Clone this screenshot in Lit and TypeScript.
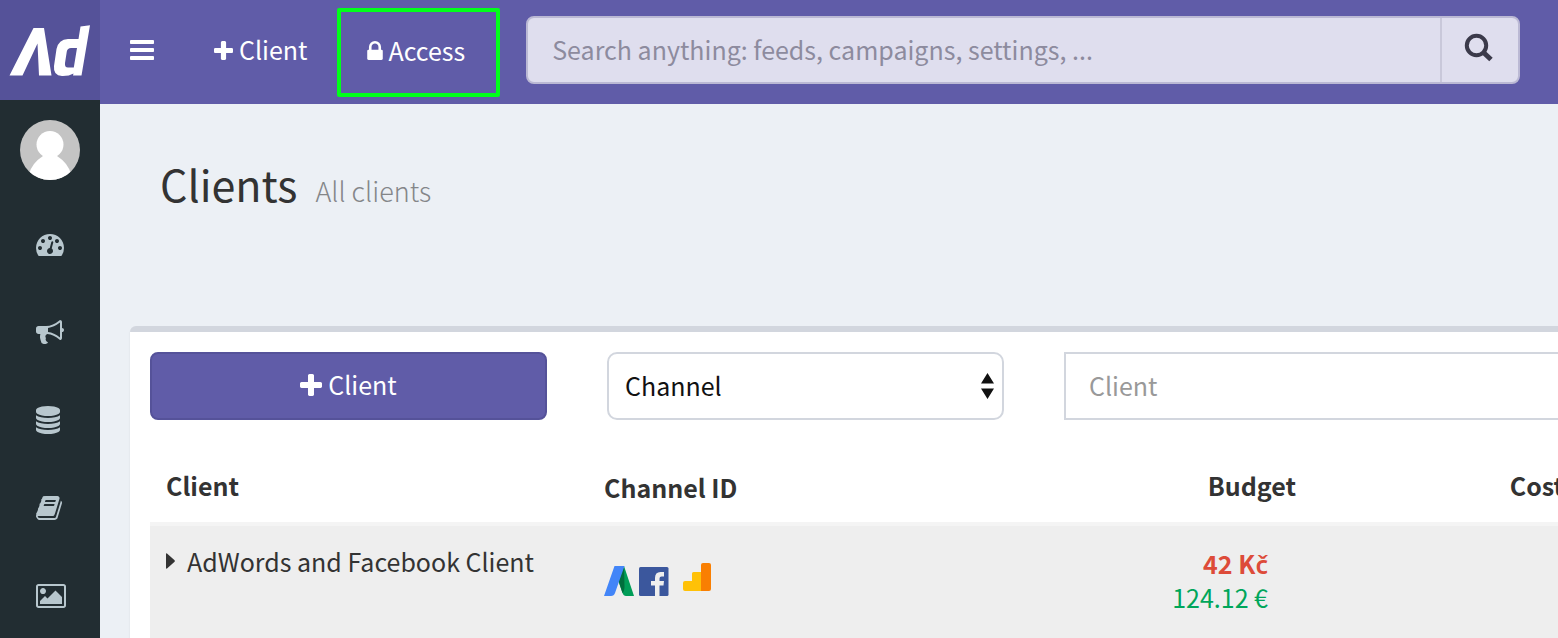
import { LitElement, html, css, svg } from "lit";
import { customElement } from "lit/decorators.js";

const icon = (box: string, d: string, cls: string) => html`
  <svg class=${cls} viewBox=${box} aria-hidden="true">${svg`<path d=${d} fill="currentColor"></path>`}</svg>
`;

const PLUS =
  "M1600 736v192q0 40-28 68t-68 28h-416v416q0 40-28 68t-68 28h-192q-40 0-68-28t-28-68v-416h-416q-40 0-68-28t-28-68v-192q0-40 28-68t68-28h416v-416q0-40 28-68t68-28h192q40 0 68 28t28 68v416h416q40 0 68 28t28 68z";
const BARS =
  "M1664 1344v128q0 26-19 45t-45 19h-1408q-26 0-45-19t-19-45v-128q0-26 19-45t45-19h1408q26 0 45 19t19 45zm0-512v128q0 26-19 45t-45 19h-1408q-26 0-45-19t-19-45v-128q0-26 19-45t45-19h1408q26 0 45 19t19 45zm0-512v128q0 26-19 45t-45 19h-1408q-26 0-45-19t-19-45v-128q0-26 19-45t45-19h1408q26 0 45 19t19 45z";
const LOCK =
  "M640 768h512v-192q0-106-75-181t-181-75-181 75-75 181v192zm832 96v576q0 40-28 68t-68 28h-960q-40 0-68-28t-28-68v-576q0-40 28-68t68-28h32v-192q0-184 132-316t316-132 316 132 132 316v192h32q40 0 68 28t28 68z";

const MENU = [
  {
    label: "Dashboard",
    size: "w28 h24",
    box: "0 128 1792 1536",
    d: "M384 1152q0-53-37.5-90.5t-90.5-37.5-90.5 37.5-37.5 90.5 37.5 90.5 90.5 37.5 90.5-37.5 37.5-90.5zm192-448q0-53-37.5-90.5t-90.5-37.5-90.5 37.5-37.5 90.5 37.5 90.5 90.5 37.5 90.5-37.5 37.5-90.5zm428 481l101-382q6-26-7.5-48.5t-38.5-29.5-48 6.5-30 39.5l-101 382q-60 5-107 43.5t-63 98.5q-20 77 20 146t117 89 146-20 89-117q16-60-6-117t-72-91zm660-33q0-53-37.5-90.5t-90.5-37.5-90.5 37.5-37.5 90.5 37.5 90.5 90.5 37.5 90.5-37.5 37.5-90.5zm-640-640q0-53-37.5-90.5t-90.5-37.5-90.5 37.5-37.5 90.5 37.5 90.5 90.5 37.5 90.5-37.5 37.5-90.5zm448 192q0-53-37.5-90.5t-90.5-37.5-90.5 37.5-37.5 90.5 37.5 90.5 90.5 37.5 90.5-37.5 37.5-90.5zm320 448q0 261-141 483-19 29-54 29h-1402q-35 0-54-29-141-221-141-483 0-182 71-348t191-286 286-191 348-71 348 71 286 191 191 286 71 348z",
  },
  {
    label: "Campaigns",
    size: "w28 h24",
    box: "0 128 1792 1536",
    d: "M1664 640q53 0 90.5 37.5t37.5 90.5-37.5 90.5-90.5 37.5v384q0 52-38 90t-90 38q-417-347-812-380-58 19-91 66t-31 100.5 40 92.5q-20 33-23 65.5t6 58 33.5 55 48 50 61.5 50.5q-29 58-111.5 83t-168.5 11.5-132-55.5q-7-23-29.5-87.5t-32-94.5-23-89-15-101 3.5-98.5 22-110.5h-122q-66 0-113-47t-47-113v-192q0-66 47-113t113-47h480q435 0 896-384 52 0 90 38t38 90v384zm-128 604v-954q-394 302-768 343v270q377 42 768 341z",
  },
  {
    label: "Feeds",
    size: "w24 h28",
    box: "128 0 1536 1792",
    d: "M896 768q237 0 443-43t325-127v170q0 69-103 128t-280 93.5-385 34.5-385-34.5-280-93.5-103-128v-170q119 84 325 127t443 43zm0 768q237 0 443-43t325-127v170q0 69-103 128t-280 93.5-385 34.5-385-34.5-280-93.5-103-128v-170q119 84 325 127t443 43zm0-384q237 0 443-43t325-127v170q0 69-103 128t-280 93.5-385 34.5-385-34.5-280-93.5-103-128v-170q119 84 325 127t443 43zm0-1152q208 0 385 34.5t280 93.5 103 128v128q0 69-103 128t-280 93.5-385 34.5-385-34.5-280-93.5-103-128v-128q0-69 103-128t280-93.5 385-34.5z",
  },
  {
    label: "Guide",
    size: "w26 h24",
    box: "64 128 1664 1536",
    d: "M1703 478q40 57 18 129l-275 906q-19 64-76.5 107.5t-122.5 43.5h-923q-77 0-148.5-53.5t-99.5-131.5q-24-67-2-127 0-4 3-27t4-37q1-8-3-21.5t-3-19.5q2-11 8-21t16.5-23.5 16.5-23.5q23-38 45-91.5t30-91.5q3-10 .5-30t-.5-28q3-11 17-28t17-23q21-36 42-92t25-90q1-9-2.5-32t.5-28q4-13 22-30.5t22-22.5q19-26 42.5-84.5t27.5-96.5q1-8-3-25.5t-2-26.5q2-8 9-18t18-23 17-21q8-12 16.5-30.5t15-35 16-36 19.5-32 26.5-23.5 36-11.5 47.5 5.5l-1 3q38-9 51-9h761q74 0 114 56t18 130l-274 906q-36 119-71.5 153.5t-128.5 34.5h-869q-27 0-38 15-11 16-1 43 24 70 144 70h923q29 0 56-15.5t35-41.5l300-987q7-22 5-57 38 15 59 43zm-1064 2q-4 13 2 22.5t20 9.5h608q13 0 25.5-9.5t16.5-22.5l21-64q4-13-2-22.5t-20-9.5h-608q-13 0-25.5 9.5t-16.5 22.5zm-83 256q-4 13 2 22.5t20 9.5h608q13 0 25.5-9.5t16.5-22.5l21-64q4-13-2-22.5t-20-9.5h-608q-13 0-25.5 9.5t-16.5 22.5z",
  },
  {
    label: "Images",
    size: "w30 h24",
    box: "0 128 1920 1536",
    d: "M640 576q0 80-56 136t-136 56-136-56-56-136 56-136 136-56 136 56 56 136zm1024 384v448h-1408v-192l320-320 160 160 512-512zm96-704h-1600q-13 0-22.5 9.5t-9.5 22.5v1216q0 13 9.5 22.5t22.5 9.5h1600q13 0 22.5-9.5t9.5-22.5v-1216q0-13-9.5-22.5t-22.5-9.5zm160 32v1216q0 66-47 113t-113 47h-1600q-66 0-113-47t-47-113v-1216q0-66 47-113t113-47h1600q66 0 113 47t47 113z",
  },
];

@customElement("app-root")
export class AppRoot extends LitElement {
  static styles = css`
    :host {
      display: flex;
      height: 100vh;
      overflow: hidden;
      background: #ecf0f5;
      color: #333;
      font: 400 25px/34px "Noto Sans CJK JP", "Noto Sans", sans-serif;
    }
    * {
      box-sizing: border-box;
    }
    a {
      color: inherit;
      text-decoration: none;
    }
    button,
    input,
    select {
      font: inherit;
      margin: 0;
      outline: none;
    }
    svg {
      display: block;
      flex: none;
    }
    .sidebar {
      flex: none;
      width: 100px;
      background: #222d32;
      color: #b8c7ce;
    }
    .logo {
      display: flex;
      height: 100px;
      background: #555299;
    }
    .logo svg {
      width: 100px;
      height: 100px;
    }
    .avatar {
      display: block;
      width: 60px;
      height: 60px;
      margin: 20px;
    }
    .menu {
      list-style: none;
      margin: 0;
      padding: 0;
    }
    .menu a {
      display: flex;
      align-items: center;
      height: 88px;
      padding-left: 36px;
    }
    .w24 { width: 24px; }
    .w26 { width: 26px; }
    .w28 { width: 28px; }
    .w30 { width: 30px; }
    .h24 { height: 24px; }
    .h28 { height: 28px; }
    .page {
      flex: 1;
      min-width: 0;
      overflow: hidden;
    }
    .topbar {
      display: flex;
      align-items: stretch;
      height: 104px;
      padding-right: 38px;
      background: #605ca8;
      color: #fff;
    }
    .toggle {
      display: flex;
      align-items: center;
      padding: 0 30px 4px;
      border: 0;
      background: none;
      color: inherit;
    }
    .bars {
      width: 24px;
      height: 20px;
    }
    .nav-link {
      display: flex;
      align-items: center;
      gap: 6px;
      padding: 0 30px 4px;
    }
    .nav-link span,
    .add span {
      padding-bottom: 2px;
    }
    .nav-link .plus {
      width: 19px;
      height: 19px;
    }
    .lock {
      width: 16px;
      height: 19px;
    }
    .marked {
      gap: 5px;
      margin: 8px 26px 7px 0;
      border: 4px solid #00ff1a;
      border-radius: 2px;
      padding: 0 31px 4px 26px;
    }
    .search {
      display: flex;
      flex: 1;
      min-width: 0;
      margin: 16px 0 20px;
      border: 2px solid #bbb9d4;
      border-radius: 8px;
      background: #dfdeee;
    }
    .search input {
      flex: 1;
      min-width: 0;
      padding: 0 24px 2px;
      border: 0;
      background: none;
      color: #333;
    }
    .search input::placeholder {
      color: #8d8b9e;
      opacity: 1;
    }
    .search button {
      display: flex;
      justify-content: center;
      width: 78px;
      padding: 15px 2px 0 0;
      border: 0;
      border-left: 2px solid #c9c8da;
      background: none;
      color: #3b3a4a;
    }
    .search svg {
      width: 30px;
      height: 30px;
    }
    .heading {
      display: flex;
      align-items: baseline;
      gap: 18px;
      height: 222px;
      padding: 49px 60px;
    }
    h1 {
      margin: 0;
      font-size: 43px;
      line-height: 60px;
      font-weight: 400;
    }
    .sub {
      font-size: 27px;
      font-weight: 300;
      color: #848689;
    }
    .box {
      margin: 0 -320px 0 30px;
      padding: 20px;
      border-top: 6px solid #d2d6de;
      border-radius: 6px;
      background: #fff;
      box-shadow: 0 2px 2px rgba(0, 0, 0, 0.1);
    }
    .filters {
      display: grid;
      grid-template-columns: 1fr 1fr 2fr;
      gap: 60px;
    }
    .add {
      display: flex;
      align-items: center;
      justify-content: center;
      gap: 6px;
      height: 68px;
      padding: 0 0 2px;
      border: 2px solid #555299;
      border-radius: 8px;
      background: #605ca8;
      color: #fff;
    }
    .add .plus {
      width: 22px;
      height: 22px;
    }
    .select {
      position: relative;
      display: flex;
    }
    .select select {
      width: 100%;
      height: 68px;
      padding: 0 40px 2px 16px;
      appearance: none;
      border: 2px solid #d2d6de;
      border-radius: 10px;
      background: #fff;
      color: #111;
    }
    .select svg {
      position: absolute;
      top: 21px;
      right: 10px;
      width: 13px;
      height: 26px;
      pointer-events: none;
    }
    .filter-input {
      width: 100%;
      height: 68px;
      padding: 0 23px 2px;
      border: 2px solid #d2d6de;
      border-radius: 0;
      background: #fff;
      color: #555;
    }
    .filter-input::placeholder {
      color: #999;
      opacity: 1;
    }
    table {
      width: 100%;
      margin-top: 32px;
      table-layout: fixed;
      border-collapse: collapse;
    }
    th,
    td {
      padding: 16px;
      text-align: left;
      vertical-align: top;
    }
    th {
      padding: 16px 16px 20px;
      border-bottom: 4px solid #f4f4f4;
      font-weight: 700;
    }
    th.low {
      padding: 18px 16px;
    }
    .c-client { width: 438px; }
    .c-channel { width: 432px; }
    .c-budget { width: 292px; }
    .c-cost { width: 268px; }
    th.num {
      text-align: right;
    }
    tbody tr {
      height: 140px;
      background: #eee;
    }
    td.first {
      padding: 18px 16px;
    }
    td.num {
      padding: 20px 44px 20px 16px;
      text-align: right;
    }
    .expander {
      display: flex;
      align-items: center;
      gap: 12px;
      padding: 0;
      border: 0;
      background: none;
      color: inherit;
      white-space: nowrap;
    }
    .caret {
      width: 9px;
      height: 16px;
    }
    .channels {
      display: flex;
      align-items: flex-start;
      padding-top: 21px;
    }
    .channels svg {
      width: 30px;
      height: 33px;
    }
    .channels .fb {
      margin: 0 14px 0 5px;
    }
    .over {
      font-weight: 700;
      color: #dd4b39;
    }
    .accented {
      font-family: "Noto Sans", sans-serif;
      font-weight: 600;
      line-height: 1;
    }
    .ok {
      color: #00a65a;
    }
  `;

  render() {
    return html`
      <aside class="sidebar">
        <a class="logo" href="#" aria-label="Home">
          <svg viewBox="0 0 100 100" aria-hidden="true">
            <path fill="#fff" d="M33.500 28H44L51.500 75.500H39L37.500 43.500L22.500 75.500H9.500Z"></path>
            <path
              fill="#fff"
              fill-rule="evenodd"
              d="M80.500 26.500L90 25.200L81.500 75.500H73L73.500 73.500Q69 76.200 62 76Q53 75.500 54 66L56.500 49Q58.500 39.500 68 39H78.500ZM77 48H71Q67.500 48 66.800 51.500L65 63Q64.500 67.500 68 67.500H73.800Z"
            ></path>
          </svg>
        </a>
        <svg class="avatar" viewBox="0 0 60 60" aria-hidden="true">
          <clipPath id="round"><circle cx="30" cy="30" r="30"></circle></clipPath>
          <g clip-path="url(#round)">
            <rect width="60" height="60" fill="#c4c4c4"></rect>
            <circle cx="30" cy="24.500" r="13.500" fill="#fff"></circle>
            <path fill="#fff" d="M9 54Q12 43 23 36H37Q48 43 51 54V60H9Z"></path>
          </g>
        </svg>
        <ul class="menu">
          ${MENU.map((m) => html`<li><a href="#" aria-label=${m.label}>${icon(m.box, m.d, m.size)}</a></li>`)}
        </ul>
      </aside>
      <div class="page">
        <header class="topbar">
          <button class="toggle" type="button" aria-label="Toggle menu">${icon("128 256 1536 1280", BARS, "bars")}</button>
          <a class="nav-link" href="#">${icon("192 128 1408 1408", PLUS, "plus")}<span>Client</span></a>
          <a class="nav-link marked" href="#">${icon("320 128 1152 1408", LOCK, "lock")}<span>Access</span></a>
          <form class="search" role="search">
            <input type="text" aria-label="Search" placeholder="Search anything: feeds, campaigns, settings, ..." />
            <button type="button" aria-label="Search">
              <svg viewBox="0 0 30 30" fill="none" stroke="currentColor" aria-hidden="true">
                <circle cx="12.500" cy="12.500" r="9.700" stroke-width="4"></circle>
                <path d="M19.500 19.500L27 26.500" stroke-width="5"></path>
              </svg>
            </button>
          </form>
        </header>
        <main>
          <div class="heading">
            <h1>Clients</h1>
            <span class="sub">All clients</span>
          </div>
          <section class="box">
            <div class="filters">
              <button class="add" type="button">${icon("192 128 1408 1408", PLUS, "plus")}<span>Client</span></button>
              <div class="select">
                <select aria-label="Channel">
                  <option>Channel</option>
                </select>
                <svg viewBox="0 0 13 26" aria-hidden="true">
                  <path d="M6.500 0L13 10.500H0ZM6.500 26L0 15.500H13Z" fill="#111"></path>
                </svg>
              </div>
              <input class="filter-input" type="text" aria-label="Client" placeholder="Client" />
            </div>
            <table>
              <colgroup>
                <col class="c-client" />
                <col class="c-channel" />
                <col class="c-budget" />
                <col class="c-cost" />
                <col />
              </colgroup>
              <thead>
                <tr>
                  <th>Client</th>
                  <th class="low">Channel ID</th>
                  <th class="num">Budget</th>
                  <th class="num">Cost</th>
                  <th></th>
                </tr>
              </thead>
              <tbody>
                <tr>
                  <td class="first">
                    <button class="expander" type="button">
                      ${icon("0 0 9 16", "M0 1Q0 0 1 .5L8.600 7.300Q9 8 8.600 8.700L1 15.500Q0 16 0 15Z", "caret")}
                      <span>AdWords and Facebook Client</span>
                    </button>
                  </td>
                  <td>
                    <div class="channels">
                      <svg viewBox="0 0 30 33" role="img" aria-label="AdWords">
                        <path d="M20 3L30 33H22Q19.500 33 18.500 30L14.500 18Z" fill="#009d57"></path>
                        <path d="M20 3L20.500 24Q20 29 18.500 30L14.500 18Z" fill="#006e3c"></path>
                        <path d="M10.500 3H20.500L11 30Q10 33 7 33H0Z" fill="#4285f8"></path>
                      </svg>
                      <svg class="fb" viewBox="0 0 30 33" role="img" aria-label="Facebook">
                        <rect y="4" width="29.500" height="29" rx="1.500" fill="#3b579d"></rect>
                        <path
                          d="M16 33V22.500H12V18H16V15Q16 9 21.500 9H25V13.500H22.500Q20.500 13.500 20.500 15.500V18H25L24.500 22.500H20.500V33Z"
                          fill="#eee"
                        ></path>
                      </svg>
                      <svg viewBox="0 0 30 33" role="img" aria-label="Analytics">
                        <path
                          d="M2 18H9V10.500Q9 9 10.500 9H19V28H2Q0 28 0 26V20Q0 18 2 18Z"
                          fill="#ffc107"
                        ></path>
                        <path d="M20 0H26Q28 0 28 2V26Q28 28 26 28H18V2Q18 0 20 0Z" fill="#f97f02"></path>
                      </svg>
                    </div>
                  </td>
                  <td class="num">
                    <div class="over">42 K<span class="accented">č</span></div>
                    <div class="ok">124.12 €</div>
                  </td>
                  <td></td>
                  <td></td>
                </tr>
              </tbody>
            </table>
          </section>
        </main>
      </div>
    `;
  }
}
